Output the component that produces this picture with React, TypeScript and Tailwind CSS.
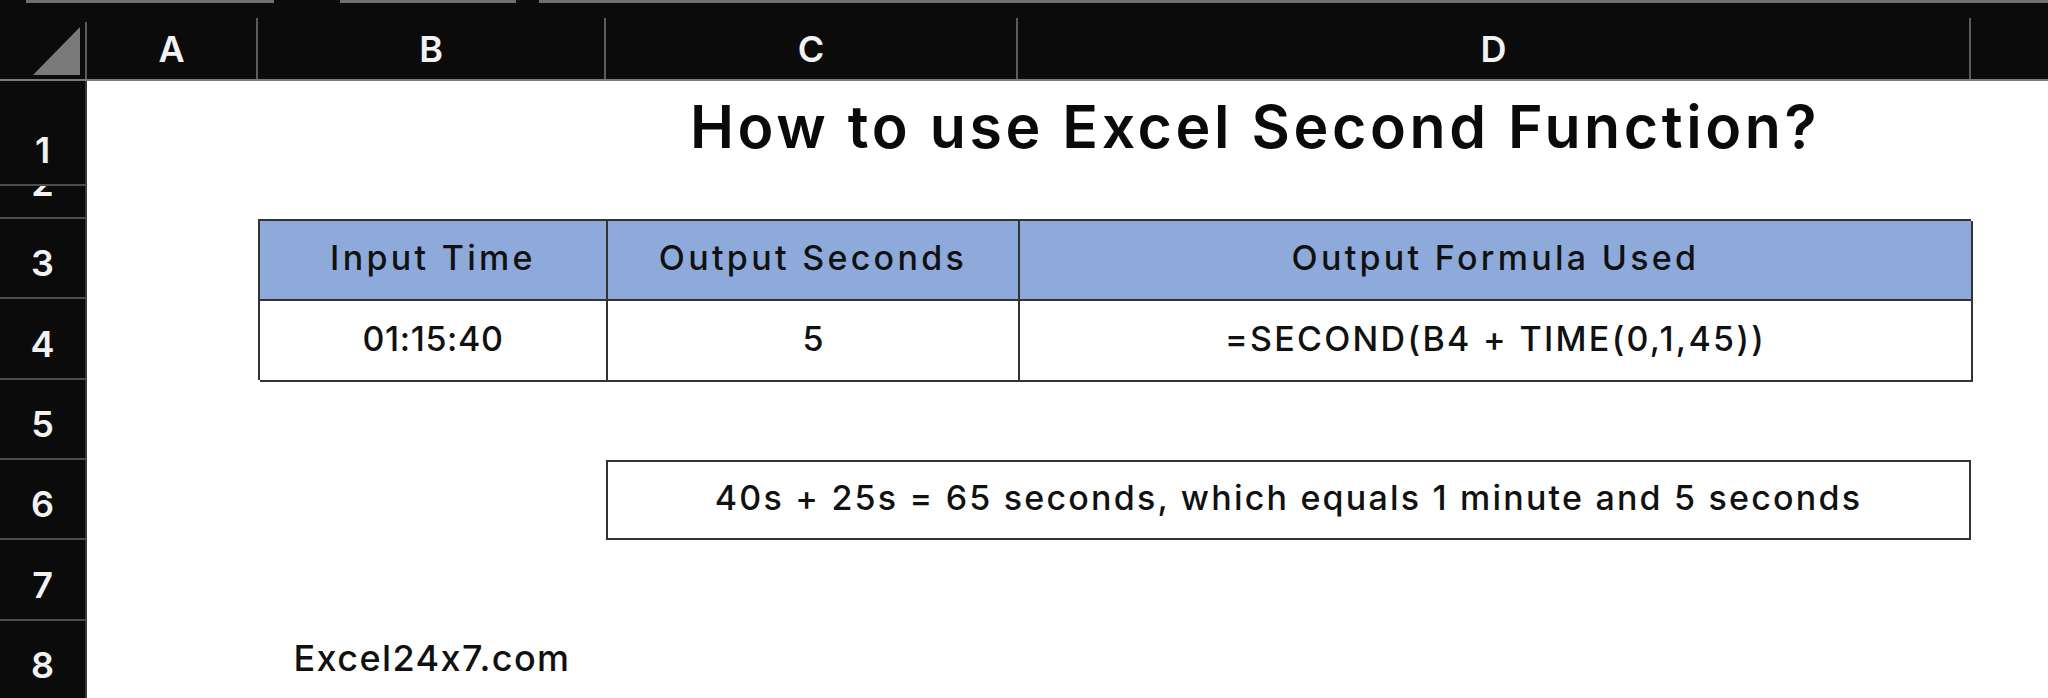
import React from 'react';

const FONT = "font-['Inter','Noto_Sans',sans-serif] [font-variant-ligatures:no-contextual]";

function ColHead({ label, w }: { label: string; w: string }) {
  return (
    <div className={`${w} flex`}>
      <div className="flex-1 flex items-end justify-center pb-[12px] text-[36px] leading-[36px] font-semibold text-[#f2f2f2]">
        {label}
      </div>
      <div className="w-[2px] h-[61px] self-end bg-[#5c5c5c]" />
    </div>
  );
}

function RowHead({ n, row }: { n: number; row: string }) {
  return (
    <div
      className={`${row} col-start-1 flex items-end justify-center overflow-hidden pb-[16px] bg-[#0b0b0b] border-b-2 border-r-2 border-b-[#4d4d4d] border-r-[#3a3a3a] text-[36px] leading-[36px] font-semibold text-[#f2f2f2]`}
    >
      {n}
    </div>
  );
}

const rowClasses = [
  'row-start-1',
  'row-start-2',
  'row-start-3',
  'row-start-4',
  'row-start-5',
  'row-start-6',
  'row-start-7',
  'row-start-8',
];

export default function App() {
  const headers = ['Input Time', 'Output Seconds', 'Output Formula Used'];

  return (
    <div className={`w-[2048px] h-[698px] overflow-hidden bg-white ${FONT}`}>
      {/* column header bar */}
      <div className="h-[81px] flex flex-col bg-[#0b0b0b]">
        <div className="h-[3px] flex">
          <div className="w-[26px]" />
          <div className="w-[248px] bg-[#707070]" />
          <div className="w-[66px]" />
          <div className="w-[176px] bg-[#707070]" />
          <div className="w-[23px]" />
          <div className="flex-1 bg-[#707070]" />
        </div>
        <div className="flex-1 flex border-b-2 border-[#7b7b7b]">
          <div className="w-[87px] flex">
            <svg width="85" height="76" viewBox="0 0 85 76">
              <polygon points="80,24 80,72 33,72" fill="#7a7a7a" />
            </svg>
            <div className="w-[2px] h-[57px] self-end bg-[#5c5c5c]" />
          </div>
          <ColHead label="A" w="w-[171px]" />
          <ColHead label="B" w="w-[348px]" />
          <ColHead label="C" w="w-[412px]" />
          <ColHead label="D" w="w-[953px]" />
          <div className="flex-1" />
        </div>
      </div>

      {/* sheet body */}
      <div className="grid grid-cols-[87px_171px_348px_412px_953px_77px] grid-rows-[105px_33px_80px_81px_80px_80px_81px_80px]">
        {rowClasses.map((row, i) => (
          <RowHead key={row} n={i + 1} row={row} />
        ))}

        {/* title */}
        <div className="row-start-1 col-start-4 col-span-2 flex items-end pb-[30px] pl-[84px] whitespace-nowrap text-[59px] leading-[59px] font-semibold tracking-[3.6px] text-[#0a0a0a]">
          How to use Excel Second Function?
        </div>

        {/* data table */}
        <div className="row-start-3 row-span-2 col-start-3 col-span-3 grid grid-cols-[348px_412px_953px] grid-rows-[80px_81px] border-l-2 border-t-2 border-[#333] text-[34px] font-medium text-[#111]">
          {headers.map((h) => (
            <div
              key={h}
              className="flex items-center justify-center pb-[5px] bg-[#8eaadb] border-r-2 border-b-2 border-[#333] tracking-[3.3px] whitespace-nowrap"
            >
              {h}
            </div>
          ))}
          <div className="flex items-center justify-center pb-[5px] border-r-2 border-b-2 border-[#333] tracking-[0.6px]">
            01:15:40
          </div>
          <div className="flex items-center justify-center pb-[5px] border-r-2 border-b-2 border-[#333]">5</div>
          <div className="flex items-center justify-center pb-[5px] border-r-2 border-b-2 border-[#333] tracking-[2.3px] whitespace-nowrap">
            =SECOND(B4 + TIME(0,1,45))
          </div>
        </div>

        {/* explanation */}
        <div className="row-start-6 col-start-4 col-span-2 flex items-center justify-center pb-[5px] border-2 border-[#333] text-[34px] font-medium tracking-[2.2px] text-[#111] whitespace-nowrap">
          40s + 25s = 65 seconds, which equals 1 minute and 5 seconds
        </div>

        {/* watermark */}
        <div className="row-start-8 col-start-3 flex items-center justify-center pb-[6px] text-[36px] font-medium tracking-[1.4px] text-[#111]">
          Excel24x7.com
        </div>
      </div>
    </div>
  );
}
